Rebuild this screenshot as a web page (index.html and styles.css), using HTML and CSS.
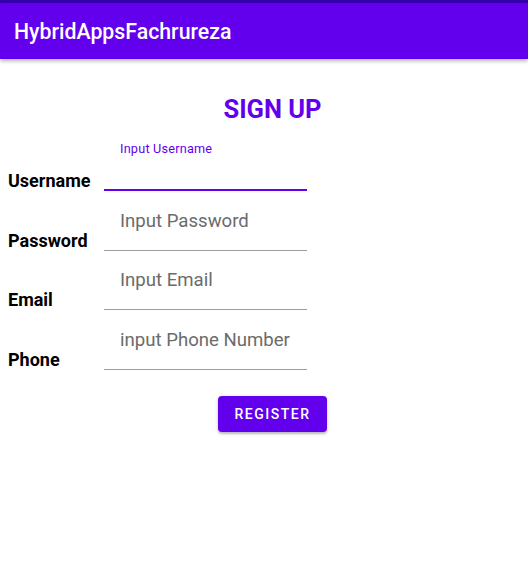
FILE: index.html
```html
<!DOCTYPE html>
<html>
<head>
<meta charset="utf-8">
<link rel="stylesheet" href="styles.css">
</head>
<body>
<div class="status"></div>
<header class="appbar">HybridAppsFachrureza</header>
<main class="content">
  <h1 class="heading">SIGN UP</h1>
  <div class="form">
    <div class="row">
      <span class="label">Username</span>
      <div class="field focused">
        <span class="float">Input Username</span>
      </div>
    </div>
    <div class="row">
      <span class="label">Password</span>
      <div class="field"><span class="ph">Input Password</span></div>
    </div>
    <div class="row">
      <span class="label">Email</span>
      <div class="field"><span class="ph">Input Email</span></div>
    </div>
    <div class="row">
      <span class="label">Phone</span>
      <div class="field"><span class="ph">input Phone Number</span></div>
    </div>
  </div>
  <div class="actions"><button class="btn">REGISTER</button></div>
</main>
</body>
</html>
```
FILE: styles.css
```css
* { box-sizing: border-box; }
html, body { margin: 0; padding: 0; background: #fff; }
body { font-family: Roboto, "Noto Sans", sans-serif; width: 528px; height: 579px; overflow: hidden; }
.status { height: 3px; background: #3700b3; }
.appbar {
  height: 56px;
  background: #6200ee;
  color: #fff;
  font-size: 21.3px;
  font-weight: 500;
  padding: 0 14px;
  display: flex;
  align-items: center;
  box-shadow: 0 2px 4px rgba(0,0,0,0.3);
  position: relative;
}
.content { padding-top: 36px; }
.heading {
  margin: 0;
  text-align: center;
  padding-left: 17px;
  color: #6200ee;
  font-size: 25.5px;
  font-weight: 700;
  line-height: 28px;
}
.form { padding-left: 8px; margin-top: 8px; }
.row { display: flex; align-items: flex-end; height: 59.7px; }
.row:first-child { height: 60px; }
.label {
  width: 96px;
  font-size: 18px;
  font-weight: 700;
  color: #000;
  line-height: 20px;
  padding-bottom: 0;
}
.field {
  width: 203px;
  height: 56px;
  border-bottom: 1px solid #9e9e9e;
  position: relative;
  padding-left: 16px;
}
.field.focused { border-bottom: 2px solid #6200ee; }
.float {
  position: absolute;
  left: 16px;
  top: 6px;
  font-size: 12.7px;
  color: #6200ee;
  letter-spacing: 0.2px;
}
.ph {
  display: block;
  padding-top: 15px;
  font-size: 18.6px;
  color: #6b6b6b;
  line-height: 22px;
}
.actions { display: flex; justify-content: center; padding-left: 17px; margin-top: 26px; }
.btn {
  width: 109px;
  height: 36px;
  border: none;
  border-radius: 4px;
  background: #6200ee;
  color: #fff;
  font-family: Roboto, sans-serif;
  font-size: 14px;
  font-weight: 500;
  letter-spacing: 1.5px;
  box-shadow: 0 2px 2px rgba(0,0,0,0.2), 0 1px 5px rgba(0,0,0,0.12);
  padding: 0;
}
```
